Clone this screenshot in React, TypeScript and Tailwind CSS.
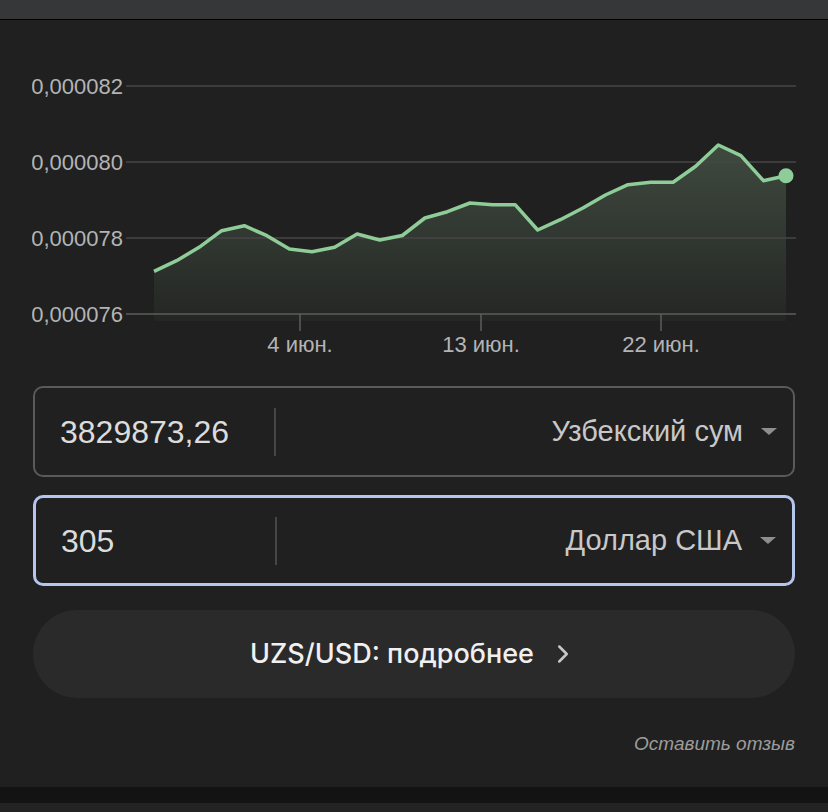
import { ChevronRight } from 'lucide-react'

// курс UZS/USD за месяц, y в пикселях графика
const points = [
  272.3, 261.7, 248.3, 231.7, 226.7, 236.7, 250, 252.7, 248.3, 235, 241, 236.5,
  219, 212.7, 204, 205.7, 205.7, 231, 220.7, 209, 196, 185.7, 183.3, 183.3,
  167.3, 146, 156.7, 181.7, 176.7,
]

const gridLines = [
  { y: 87, label: '0,000082' },
  { y: 163, label: '0,000080' },
  { y: 239, label: '0,000078' },
  { y: 315, label: '0,000076' },
]

const ticks = [
  { x: 300, label: '4 июн.' },
  { x: 481, label: '13 июн.' },
  { x: 661, label: '22 июн.' },
]

const RateChart = () => {
  const x0 = 154
  const step = (786 - 154) / (points.length - 1)
  const coords = points.map((y, i) => [x0 + i * step, y] as const)
  const line = coords.map(([x, y], i) => `${i ? 'L' : 'M'}${x.toFixed(1)} ${y}`).join(' ')
  const last = coords[coords.length - 1]
  const area = `${line} L${last[0]} 322 L${x0} 322 Z`

  return (
    <svg width="764" height="300" viewBox="32 60 764 300" className="block">
      <defs>
        <linearGradient id="fill" x1="0" y1="0" x2="0" y2="1">
          <stop offset="0%" stopColor="#3f4a3f" />
          <stop offset="100%" stopColor="#242624" />
        </linearGradient>
      </defs>

      <path d={area} fill="url(#fill)" />

      {gridLines.map((g, i) => (
        <g key={g.y}>
          <line
            x1="126"
            x2="796"
            y1={g.y}
            y2={g.y}
            stroke={i === gridLines.length - 1 ? '#5c5c5c' : '#464646'}
            strokeWidth="1.5"
          />
          <text
            x="123"
            y={g.y}
            textAnchor="end"
            dominantBaseline="central"
            fill="#b4b4b4"
            fontSize="22"
            fontFamily="'Liberation Sans', Arial, sans-serif"
          >
            {g.label}
          </text>
        </g>
      ))}

      {ticks.map((t) => (
        <g key={t.x}>
          <line x1={t.x} x2={t.x} y1="315" y2="332" stroke="#5c5c5c" strokeWidth="1.5" />
          <text
            x={t.x}
            y="345"
            textAnchor="middle"
            dominantBaseline="central"
            fill="#b4b4b4"
            fontSize="22"
            fontFamily="'Liberation Sans', Arial, sans-serif"
          >
            {t.label}
          </text>
        </g>
      ))}

      <path d={line} fill="none" stroke="#8fcd98" strokeWidth="3.5" strokeLinejoin="round" />
      <circle cx={last[0]} cy={last[1]} r="7.5" fill="#8fcd98" />
    </svg>
  )
}

const CurrencyField = ({
  value,
  currency,
  active,
}: {
  value: string
  currency: string
  active?: boolean
}) => (
  <div
    className={`flex h-[91px] items-center rounded-[10px] ${
      active ? 'border-[3px] border-[#b4c5ee]' : 'border-2 border-[#5a5a5a]'
    }`}
  >
    <div className="w-[239px] shrink-0 pl-[25px] text-[32px] text-[#dcdcdc]">{value}</div>
    <div className="h-[48px] w-[1.5px] bg-[#464646]" />
    <div className="flex flex-1 items-center justify-end gap-[18px] pr-[16px]">
      <span className="text-[29px] text-[#c8c8c8]">{currency}</span>
      <span className="h-0 w-0 border-x-[8px] border-t-[7px] border-x-transparent border-t-[#8e8e8e]" />
    </div>
  </div>
)

export default function App() {
  return (
    <div className="flex min-h-[812px] flex-col bg-[#202020] font-['Liberation_Sans',Arial,sans-serif]">
      <div className="h-[20px] border-b border-black bg-[#363739]" />

      <div className="flex flex-1 flex-col px-[33px]">
        <div className="-ml-px mt-[39px]">
          <RateChart />
        </div>

        <div className="mt-[27px] flex flex-col gap-[18px]">
          <CurrencyField value="3829873,26" currency="Узбекский сум" />
          <CurrencyField value="305" currency="Доллар США" active />
        </div>

        <button className="mt-[24px] flex h-[88px] items-center justify-center gap-[14px] rounded-full bg-[#2a2a2a] font-['Inter',sans-serif] text-[27px] font-medium text-[#f0f0f0]">
          UZS/USD: подробнее
          <ChevronRight size={30} strokeWidth={2} className="text-[#c8c8c8]" />
        </button>

        <div className="mt-[32px] text-right text-[19px] italic text-[#9c9c9c]">Оставить отзыв</div>
      </div>

      <div className="mt-[28px] h-[16px] bg-[#131313]" />
      <div className="h-[10px] bg-[#232323]" />
    </div>
  )
}
